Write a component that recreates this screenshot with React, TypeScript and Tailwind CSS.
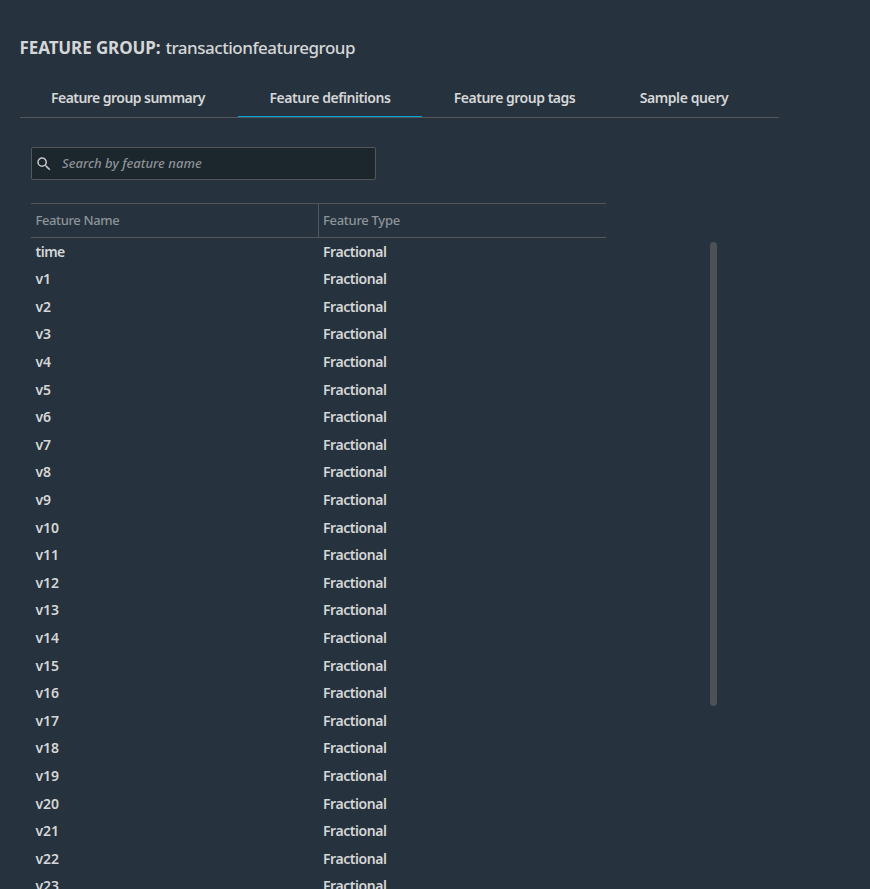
const features = ['time', ...Array.from({ length: 23 }, (_, i) => `v${i + 1}`)];

const tabs = [
  { label: 'Feature group summary', width: 'w-[218px] pr-[2px]', text: 'tracking-[-0.55px]' },
  { label: 'Feature definitions', width: 'w-[184px]', text: 'tracking-[-0.43px]', active: true },
  { label: 'Feature group tags', width: 'w-[185px]', text: 'tracking-[-0.48px]' },
  { label: 'Sample query', width: 'w-[154px]', text: 'tracking-[-0.4px]' },
];

export default function App() {
  return (
    <div className="relative h-[889px] w-[870px] overflow-hidden bg-[#26323d] pl-5 pt-9 font-['Noto_Sans',sans-serif] text-[#d5d6d7]">
      <h1 className="-ml-[0.5px] flex h-6 items-center gap-[5px] whitespace-nowrap text-[17px] leading-6">
        <span className="font-bold tracking-[-0.1px]">FEATURE GROUP:</span>
        <span className="font-medium tracking-[-0.47px]">transactionfeaturegroup</span>
      </h1>

      <nav className="mt-[18px] flex h-10 w-[759px] border-b border-[#545658]">
        {tabs.map((tab) => (
          <button
            key={tab.label}
            className={`flex h-[39px] shrink-0 justify-center whitespace-nowrap border-b pt-[10px] text-sm font-[560] leading-5 ${tab.width} ${tab.text} ${
              tab.active ? 'border-[#00a1d6]' : 'border-transparent'
            }`}
          >
            {tab.label}
          </button>
        ))}
      </nav>

      <div className="ml-[11px] mt-[29px] flex h-[33px] w-[345px] items-center rounded-[2px] border border-[#545658] bg-[#1c262d]">
        <svg viewBox="0 0 24 24" className="ml-[3px] size-[18px]" fill="#c4c6c8">
          <path d="M15.5 14h-.79l-.28-.27A6.47 6.47 0 0 0 16 9.5 6.5 6.5 0 1 0 9.5 16c1.61 0 3.09-.59 4.23-1.57l.27.28v.79l5 4.99L20.49 19l-4.99-5zm-6 0C7.01 14 5 11.99 5 9.5S7.01 5 9.5 5 14 7.01 14 9.5 11.99 14 9.5 14z" />
        </svg>
        <input
          className="mb-[2px] ml-[9px] w-[300px] bg-transparent text-[13px] font-medium tracking-[0.03px] italic leading-5 outline-none placeholder:text-[#8c9297]"
          placeholder="Search by feature name"
        />
      </div>

      <div className="mt-[23px] flex">
        <div className="ml-[11px] w-[575px]">
          <div className="flex h-[35px] items-center border-y border-[#545658] text-[13px] font-medium text-[#8d949a]">
            <div className="flex h-full w-[288px] items-center border-r border-[#545658] pl-[4.5px] tracking-[-0.38px]">
              Feature Name
            </div>
            <div className="pl-1 tracking-[-0.3px]">Feature Type</div>
          </div>
          <div className="-mt-[0.17px]">
            {features.map((name) => (
              <div key={name} className="flex h-[27.6px] items-center text-sm font-semibold">
                <div className={`w-[292px] pl-[4.5px] ${name === 'time' ? 'tracking-[-0.5px]' : 'tracking-[-0.1px]'}`}>
                  {name}
                </div>
                <div className="tracking-[-0.45px]">Fractional</div>
              </div>
            ))}
          </div>
        </div>
        <div className="ml-[104px] mt-[39px] h-[464px] w-[7px] rounded-full bg-[#4c5155]" />
      </div>
    </div>
  );
}
